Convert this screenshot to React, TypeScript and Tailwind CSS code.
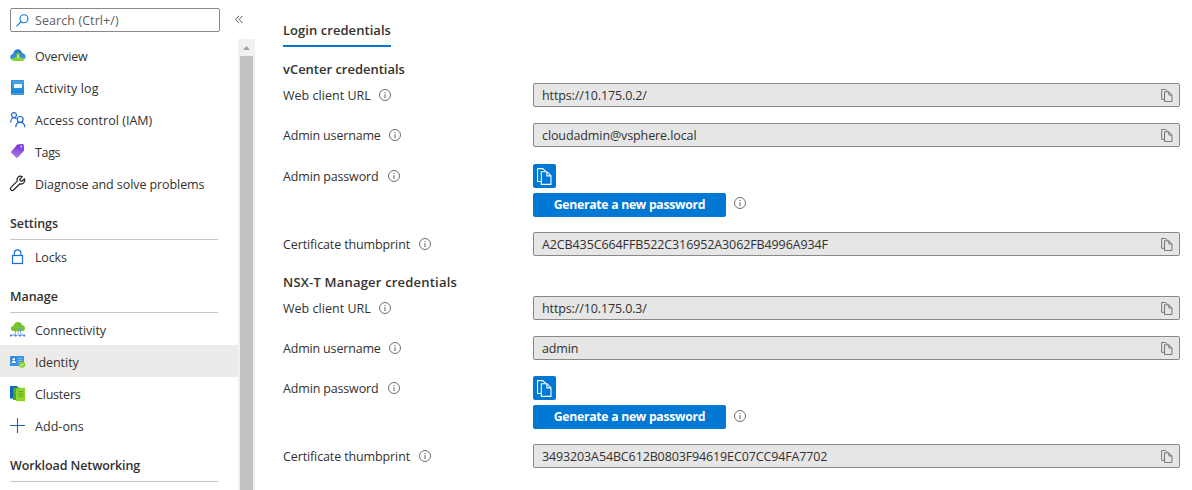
import type { ReactNode } from 'react';

function Svg({ children }: { children: ReactNode }) {
  return (
    <svg className="h-4 w-4 shrink-0 overflow-visible" viewBox="0 -0.5 16 16" fill="none">
      {children}
    </svg>
  );
}

const OverviewIcon = () => (
  <Svg>
    <defs>
      <linearGradient id="cloud" x1="0" y1="0" x2="0" y2="1">
        <stop offset="0" stopColor="#1f6fd0" />
        <stop offset="1" stopColor="#3fa0ef" />
      </linearGradient>
    </defs>
    <path d="M3.600 12.600C1.500 12.600.1 11.300.1 9.500c0-1.800 1.200-2.900 3-3.100C3.400 3.900 5.300 1.700 7.700 1.700c2.300 0 4 1.700 4.500 4 2 .2 3.400 1.500 3.400 3.500s-1.500 3.400-3.400 3.400z" fill="url(#cloud)" />
    <path d="M1.900 12.200c.2-1.300 1.500-2 2.900-1.600.8-1.300 2.200-1.500 3.300-1 1.100-.6 3-.4 3.500 1 1.200-.2 2.300.3 2.500 1.400-.3 1.200-1.300 1.600-2.500 1.600H4.400c-1.200 0-2.200-.4-2.500-1.400z" fill="#86d633" />
    <path d="M8 4.400 11 7.600H9.400v3.800H6.600V7.600H5z" fill="#6cc02b" />
    <path d="M7.300 7.200h1.400v3.800H7.300z" fill="#e0f5c0" />
  </Svg>
);

const ActivityIcon = () => (
  <Svg>
    <defs>
      <linearGradient id="book" x1="0" y1="0" x2="0" y2="1">
        <stop offset="0" stopColor="#4aa5e8" />
        <stop offset="1" stopColor="#1483d8" />
      </linearGradient>
    </defs>
    <rect x="1" y="0.500" width="13" height="15" rx="1" fill="#2a7fc8" />
    <rect x="2" y="1" width="12" height="13.300" rx=".8" fill="url(#book)" />
    <rect x="2" y="14" width="11.500" height=".8" fill="#7cc4f5" />
    <rect x="4" y="4.500" width="8" height="4" rx=".5" fill="#f3f9ff" />
  </Svg>
);

const AccessIcon = () => (
  <Svg>
    <g stroke="#1b66d2" strokeWidth="1.200">
      <circle cx="4" cy="3.600" r="2.500" />
      <path d="M.7 10.900c0-2.600 1.300-4.700 3.300-4.700 1.200 0 2 .5 2.600 1.300" />
      <circle cx="10.200" cy="7.900" r="2.900" />
      <path d="M5.800 15.700c0-2.900 1.800-4.900 4.400-4.900s4.500 2 4.500 4.900" />
    </g>
  </Svg>
);

const TagsIcon = () => (
  <Svg>
    <defs>
      <linearGradient id="tag" x1="0.600" y1="0" x2="0.400" y2="1">
        <stop offset="0" stopColor="#6f2fd2" />
        <stop offset="1" stopColor="#ad80e6" />
      </linearGradient>
    </defs>
    <path d="M7.900.9 12.600.500c.6 0 1 .4 1.100 1l.4 5c0 .4-.1.700-.4 1L7.600 14.300c-.4.400-.9.400-1.300 0L1.300 9.200c-.4-.4-.4-.9 0-1.300L7.100 1.300c.2-.2.500-.4.800-.4z" fill="url(#tag)" />
    <circle cx="11.300" cy="2.900" r=".9" fill="#fff" />
  </Svg>
);

const WrenchIcon = () => (
  <Svg>
    <path
      d="M14.500 3.300 12 5.700l-1.800-.4-.4-1.700 2.500-2.500C10.700.4 9 .6 7.900 1.800 6.900 2.900 6.700 4.200 7.200 5.600L1 11.900c-.7.800-.7 1.900 0 2.600.8.700 1.900.7 2.600 0l6.300-6.200c1.400.4 2.800.2 3.800-.9 1.100-1.100 1.400-2.700.8-4.100z"
      stroke="#2b2928"
      strokeWidth="1.250"
      strokeLinejoin="round"
    />
  </Svg>
);

const LockIcon = () => (
  <Svg>
    <g stroke="#1b6fd8" strokeWidth="1.200">
      <rect x="2.500" y="7" width="10" height="8" />
      <path d="M4.300 7V4.800c0-2 1.500-3.500 3.300-3.500s3.300 1.500 3.300 3.500V7" />
    </g>
  </Svg>
);

const ConnectivityIcon = () => (
  <Svg>
    <path d="M4.300 9.800C2.300 9.800.9 8.700.9 7c0-1.500 1.100-2.500 2.600-2.700C4 1.900 5.700.4 8 .4c2.200 0 3.900 1.400 4.200 3.400 1.700.2 2.800 1.400 2.800 2.900 0 1.800-1.400 3.100-3.200 3.100z" fill="#76c42d" />
    <path d="M5.500 7v5.200L2 13.900M8 5.800v8M10.500 7v5.200l3.500 1.700" stroke="#6f9fe0" strokeWidth=".8" />
    <path d="M1 14h14" stroke="#8cb6f0" strokeWidth=".6" />
    <g fill="#3f7fdc">
      <rect x="0" y="13" width="2" height="2" rx=".6" />
      <rect x="4.500" y="13" width="2" height="2" rx=".6" />
      <rect x="9.200" y="13" width="2" height="2" rx=".6" />
      <rect x="13.200" y="13" width="2" height="2" rx=".6" />
    </g>
  </Svg>
);

const IdentityIcon = () => (
  <Svg>
    <rect x="0" y="2.500" width="14" height="10" rx=".6" fill="#3a94ea" />
    <rect x="1.300" y="4" width="5" height="6" fill="#2372c8" />
    <circle cx="3.800" cy="5.700" r="1.300" fill="#fff" />
    <path d="M1.600 9.500c0-1.500 1-2.300 2.200-2.300S6 8 6 9.500z" fill="#fff" />
    <path d="M7.500 5h5M7.500 7h5M7.500 9h3" stroke="#7dbdf5" strokeWidth=".9" />
    <circle cx="12" cy="11.100" r="3.200" fill="#86d129" />
    <path d="m10.400 11.100 1.200 1.200 2.100-2.200" stroke="#fff" strokeWidth=".9" />
  </Svg>
);

const ClustersIcon = () => (
  <Svg>
    <path d="M0 .500 7.500.500v13L0 13z" fill="#0c66c0" />
    <path d="M3.200 2h7V14.800l-7-.3z" fill="#46a52c" />
    <path d="M6 3.300 15 2v13.700l-9-.3z" fill="#8fd428" />
    <path d="M8 6.200h5.500M8 8.400h5.500M8 10.600h5.500" stroke="#5a9c22" strokeWidth=".9" />
    <path d="M4 5h1.600M4 7h1.600" stroke="#78c24b" strokeWidth=".8" />
  </Svg>
);

const PlusIcon = () => (
  <Svg>
    <path d="M7.500.500v15M0 8h15" stroke="#1560c4" strokeWidth="1.100" />
  </Svg>
);

function InfoIcon() {
  return (
    <svg className="h-3 w-3 shrink-0" viewBox="0 0 12 12" fill="none">
      <circle cx="6" cy="6" r="5.500" stroke="#605e5c" strokeWidth=".9" />
      <path d="M6 5.100v4M6 3v1.100" stroke="#605e5c" />
    </svg>
  );
}

function CopyIcon({ className, stroke, back }: { className: string; stroke: string; back: string }) {
  return (
    <svg className={className} viewBox="0 0 16 18" fill="none" stroke={stroke} strokeWidth="1.150">
      <path d="M4.500 14.300H.600V.600h5.600l3 3" />
      <path d="M4.600 3.900h6l4.300 4.300v9.200H4.600z" fill={back} />
      <path d="M10.500 4v4.300h4.300" />
    </svg>
  );
}

type Item = { label: string; icon: ReactNode; tracking: string; active?: boolean };

function NavItem({ label, icon, tracking, active }: Item) {
  return (
    <div className={`flex h-8 w-[238px] items-center pl-2.5 ${active ? 'bg-[#edebe9]' : ''}`}>
      {icon}
      <span className={`ml-[9px] pt-1 whitespace-nowrap ${tracking}`}>{label}</span>
    </div>
  );
}

function NavHeading({ label, tracking }: { label: string; tracking: string }) {
  return (
    <div className="ml-2.5 flex h-[41px] w-52 items-center border-b border-[#c8c6c4] pt-2.5">
      <h3 className={`font-semibold whitespace-nowrap ${tracking}`}>{label}</h3>
    </div>
  );
}

function Label({ text, width, tracking }: { text: string; width: string; tracking: string }) {
  return (
    <div className="flex h-6 w-[250px] shrink-0 items-center gap-[9px]">
      <span className={`pt-0.5 whitespace-nowrap ${width} ${tracking}`}>{text}</span>
      <InfoIcon />
    </div>
  );
}

function Field({ value, tracking }: { value: string; tracking: string }) {
  return (
    <div className="flex h-6 w-[647px] items-center justify-between rounded-xs border border-[#8a8886] bg-[#e6e6e6] pr-1.5 pl-2">
      <span className={`pt-0.5 whitespace-nowrap ${tracking}`}>{value}</span>
      <CopyIcon className="h-[13px] w-3" stroke="#605e5c" back="#e6e6e6" />
    </div>
  );
}

type SectionProps = {
  title: string;
  titleTracking: string;
  url: string;
  username: string;
  usernameTracking: string;
  thumbprint: string;
  thumbTracking: string;
  passwordGap: string;
  infoOffset: string;
};

function Credentials(p: SectionProps) {
  return (
    <section>
      <h2 className={`flex h-7 items-center text-[13px] leading-4 font-semibold ${p.titleTracking}`}>{p.title}</h2>
      <div className="flex">
        <Label text="Web client URL" width="w-[87px]" tracking="tracking-[0.03px]" />
        <Field value={p.url} tracking="tracking-[-0.12px]" />
      </div>
      <div className="mt-4 flex">
        <Label text="Admin username" width="w-[97px]" tracking="tracking-[-0.18px]" />
        <Field value={p.username} tracking={p.usernameTracking} />
      </div>
      <div className={`flex ${p.passwordGap}`}>
        <Label text="Admin password" width="w-[96px]" tracking="tracking-[-0.16px]" />
        <div className="flex flex-col gap-[5px]">
          <button className="flex h-6 w-[23px] items-center justify-center rounded-xs bg-[#0078d4]">
            <CopyIcon className="h-[17px] w-[15px]" stroke="#ffffff" back="#0078d4" />
          </button>
          <div className="flex gap-2">
            <button className="h-6 w-[193px] rounded-xs bg-[#0078d4] text-[12.25px] leading-4 font-bold whitespace-nowrap text-white">
              <span className="tracking-[-0.3px]">Generate a new password</span>
            </button>
            <div className={p.infoOffset}>
              <InfoIcon />
            </div>
          </div>
        </div>
      </div>
      <div className="mt-[15px] flex">
        <Label text="Certificate thumbprint" width="w-[127px]" tracking="tracking-[-0.12px]" />
        <Field value={p.thumbprint} tracking={p.thumbTracking} />
      </div>
    </section>
  );
}

export default function App() {
  return (
    <div className="flex h-[490px] w-[1192px] overflow-hidden bg-white font-['Open_Sans','Noto_Sans',sans-serif] text-[12.5px] leading-4 text-[#323130]">
      <aside className="w-[255px] shrink-0">
        <div className="flex h-[39px] items-start pt-2 pl-2.5">
          <div className="flex h-6 w-[210px] items-center rounded-xs border border-[#8a8886] pl-[5px] text-[#605e5c]">
            <svg className="h-[13px] w-[13px]" viewBox="0 0 13 13" fill="none" stroke="#0078d4" strokeWidth="1.100">
              <circle cx="8" cy="4.800" r="4" />
              <path d="M5.100 7.700.500 12.300" />
            </svg>
            <span className="ml-1.5 pt-0.5 whitespace-nowrap tracking-[0.08px]">Search (Ctrl+/)</span>
          </div>
          <svg className="mt-[7px] ml-[15px] h-[9px] w-2" viewBox="0 0 8 9" fill="none" stroke="#605e5c">
            <path d="M4 .800.700 4.500 4 8.200M7.500.800 4.200 4.500l3.300 3.700" />
          </svg>
        </div>
        <div className="flex">
          <nav className="h-[451px] w-[238px] overflow-hidden">
            <NavItem label="Overview" icon={<OverviewIcon />} tracking="tracking-[-0.2px]" />
            <NavItem label="Activity log" icon={<ActivityIcon />} tracking="tracking-[0.1px]" />
            <NavItem label="Access control (IAM)" icon={<AccessIcon />} tracking="tracking-[0.03px]" />
            <NavItem label="Tags" icon={<TagsIcon />} tracking="tracking-[-0.35px]" />
            <NavItem label="Diagnose and solve problems" icon={<WrenchIcon />} tracking="tracking-[-0.08px]" />
            <NavHeading label="Settings" tracking="tracking-[-0.05px]" />
            <NavItem label="Locks" icon={<LockIcon />} tracking="tracking-[-0.15px]" />
            <NavHeading label="Manage" tracking="tracking-[-0.05px]" />
            <NavItem label="Connectivity" icon={<ConnectivityIcon />} tracking="tracking-[-0.03px]" />
            <NavItem label="Identity" icon={<IdentityIcon />} tracking="tracking-[-0.05px]" active />
            <NavItem label="Clusters" icon={<ClustersIcon />} tracking="tracking-[-0.2px]" />
            <NavItem label="Add-ons" icon={<PlusIcon />} tracking="tracking-[0.05px]" />
            <NavHeading label="Workload Networking" tracking="tracking-[-0.1px]" />
          </nav>
          <div className="flex h-[451px] w-[17px] flex-col items-center bg-[#f1f1f1]">
            <div className="flex h-[17px] items-center">
              <svg className="h-1 w-[7px]" viewBox="0 0 7 4">
                <path d="M3.500 0 7 4H0z" fill="#a3a3a3" />
              </svg>
            </div>
            <div className="w-[13px] grow bg-[#c1c1c1]" />
          </div>
        </div>
      </aside>
      <main className="flex flex-col items-start pl-7">
        <div className="mb-2 flex h-[47px] w-[108px] items-end border-b-2 border-[#0078d4] pb-[7px]">
          <span className="text-[13px] leading-4 font-semibold whitespace-nowrap tracking-[0.05px]">Login credentials</span>
        </div>
        <Credentials
          title="vCenter credentials"
          titleTracking="tracking-[-0.02px]"
          url="https://10.175.0.2/"
          username="cloudadmin@vsphere.local"
          usernameTracking="tracking-[-0.1px]"
          thumbprint="A2CB435C664FFB522C316952A3062FB4996A934F"
          thumbTracking="tracking-[-0.11px]"
          passwordGap="mt-[17px]"
          infoOffset="pt-1"
        />
        <div className="mt-3">
          <Credentials
            title="NSX-T Manager credentials"
            titleTracking="tracking-[0.2px]"
            url="https://10.175.0.3/"
            username="admin"
            usernameTracking="tracking-[-0.15px]"
            thumbprint="3493203A54BC612B0803F94619EC07CC94FA7702"
            thumbTracking="tracking-[-0.13px]"
            passwordGap="mt-4"
            infoOffset="pt-[5px]"
          />
        </div>
      </main>
    </div>
  );
}
